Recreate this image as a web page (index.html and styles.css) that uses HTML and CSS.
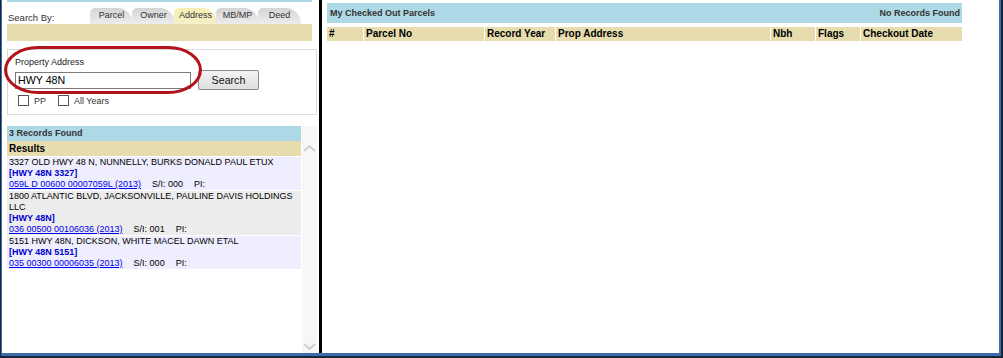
FILE: index.html
```html
<!DOCTYPE html>
<html>
<head>
<meta charset="utf-8">
<link rel="stylesheet" href="styles.css">
</head>
<body>
<div class="frame">
  <div class="frame-inner">
    <div class="left">
      <div class="topline"></div>
      <div class="tabrow">
        <span class="searchby">Search By:</span>
        <div class="tabs">
          <div class="tab">Parcel</div>
          <div class="tab">Owner</div>
          <div class="tab active">Address</div>
          <div class="tab">MB/MP</div>
          <div class="tab">Deed</div>
        </div>
      </div>
      <div class="tabbar"></div>
      <div class="searchbox">
        <div class="label">Property Address</div>
        <div class="inputrow">
          <input class="addr" type="text" value="HWY 48N">
          <button class="btn">Search</button>
        </div>
        <div class="checks">
          <label class="chk"><input type="checkbox" class="cb"> PP</label>
          <label class="chk"><input type="checkbox" class="cb"> All Years</label>
        </div>
        <div class="ring"></div>
      </div>
      <div class="results">
        <div class="reslist">
          <div class="found">3 Records Found</div>
          <div class="reshead">Results</div>
          <div class="row odd">
            <div>3327 OLD HWY 48 N, NUNNELLY, BURKS DONALD PAUL ETUX</div>
            <div class="tag">[HWY 48N 3327]</div>
            <div><a class="plink">059L D 00600 00007059L (2013)</a><span class="meta">S/I: 000</span><span class="meta">PI:</span></div>
          </div>
          <div class="row even">
            <div>1800 ATLANTIC BLVD, JACKSONVILLE, PAULINE DAVIS HOLDINGS<br>LLC</div>
            <div class="tag">[HWY 48N]</div>
            <div><a class="plink">036 00500 00106036 (2013)</a><span class="meta">S/I: 001</span><span class="meta">PI:</span></div>
          </div>
          <div class="row odd">
            <div>5151 HWY 48N, DICKSON, WHITE MACEL DAWN ETAL</div>
            <div class="tag">[HWY 48N 5151]</div>
            <div><a class="plink">035 00300 00006035 (2013)</a><span class="meta">S/I: 000</span><span class="meta">PI:</span></div>
          </div>
        </div>
        <div class="scrollbar">
          <svg width="15" height="10" viewBox="0 0 15 10"><path d="M2 8 L7.5 3 L13 8" fill="none" stroke="#cfcfcf" stroke-width="2"/></svg>
          <svg width="15" height="10" viewBox="0 0 15 10"><path d="M2 2 L7.5 7 L13 2" fill="none" stroke="#cfcfcf" stroke-width="2"/></svg>
        </div>
      </div>
    </div>
    <div class="divider"></div>
    <div class="right">
      <div class="cobar">
        <span>My Checked Out Parcels</span>
        <span>No Records Found</span>
      </div>
      <div class="cohead">
        <div>#</div>
        <div>Parcel No</div>
        <div>Record Year</div>
        <div>Prop Address</div>
        <div>Nbh</div>
        <div>Flags</div>
        <div>Checkout Date</div>
      </div>
    </div>
  </div>
</div>
</body>
</html>
```
FILE: styles.css
```css
html, body {
  margin: 0;
  padding: 0;
  background: #fff;
}
body {
  width: 1003px;
  height: 358px;
  overflow: hidden;
  font-family: "Liberation Sans", Arial, sans-serif;
  font-size: 9px;
  color: #000;
}
.frame {
  box-sizing: border-box;
  height: 358px;
  display: flex;
  border-left: 1px solid #17263a;
  border-right: 2px solid #17263a;
  border-bottom: 2px solid #17263a;
}
.frame-inner {
  flex: 1;
  display: flex;
  border-left: 1px solid #3d6da8;
  border-right: 2px solid #3d6da8;
  border-bottom: 3px solid #3d6da8;
}
.left {
  width: 317px;
  display: flex;
  flex-direction: column;
}
.divider {
  width: 3px;
  background: #000;
}
.right {
  flex: 1;
  padding: 3px 0 0 5px;
}
.topline {
  margin-left: 5px;
  width: 305px;
  height: 2px;
  background: #add8e6;
}
.tabrow {
  height: 22px;
  display: flex;
  align-items: flex-end;
  margin-left: 6px;
}
.searchby {
  width: 82px;
  color: #333;
  font-size: 9.5px;
  position: relative;
  top: -1px;
}
.tabs {
  display: flex;
  align-items: flex-end;
}
.tab {
  width: 43px;
  height: 16px;
  box-sizing: border-box;
  padding-top: 2px;
  text-align: center;
  color: #333;
  font-size: 9px;
  background: linear-gradient(#d4d4d4, #ededed);
  border-radius: 5px 15px 0 0 / 5px 16px 0 0;
  margin-right: -1px;
}
.tab.active {
  background: linear-gradient(#f6eeb0, #f5f0c8);
}
.tabbar {
  margin-left: 5px;
  width: 305px;
  height: 17px;
  background: #e6dcae;
}
.searchbox {
  position: relative;
  margin: 8px 0 0 5px;
  width: 310px;
  height: 66px;
  box-sizing: border-box;
  border: 1px solid #dcdcdc;
  padding: 7px 0 0 7px;
}
.label {
  color: #222;
  font-size: 9px;
  line-height: 11px;
}
.inputrow {
  display: flex;
  align-items: center;
  margin-top: 2px;
}
.addr {
  width: 176px;
  height: 17px;
  box-sizing: border-box;
  border: 1px solid #7a7a7a;
  padding: 0 2px;
  font-family: "Liberation Sans", Arial, sans-serif;
  font-size: 10.67px;
  color: #000;
  outline: none;
  margin: 0;
}
.btn {
  margin-left: 7px;
  width: 61px;
  height: 20px;
  box-sizing: border-box;
  border: 1px solid #8c8c8c;
  border-radius: 2px;
  background: linear-gradient(#f4f4f4, #dedede);
  font-family: "Liberation Sans", Arial, sans-serif;
  font-size: 10.67px;
  color: #111;
  padding: 0;
}
.checks {
  display: flex;
  margin-top: 5px;
  margin-left: 3px;
}
.chk {
  display: flex;
  align-items: center;
  color: #333;
  font-size: 9px;
  margin-right: 12px;
}
.cb {
  appearance: none;
  -webkit-appearance: none;
  width: 11px;
  height: 11px;
  box-sizing: border-box;
  border: 1px solid #555;
  background: #fff;
  margin: 0 5px 0 0;
}
.ring {
  position: absolute;
  left: -4px;
  top: -4px;
  width: 198px;
  height: 48px;
  box-sizing: border-box;
  border: 3px solid #b3141b;
  border-radius: 34px / 24px;
}
.results {
  margin: 11px 0 0 5px;
  flex: 1;
  display: flex;
  min-height: 0;
}
.reslist {
  width: 294px;
}
.found {
  height: 15px;
  line-height: 15px;
  background: #add8e6;
  color: #333;
  font-weight: bold;
  font-size: 9px;
  padding-left: 2px;
}
.reshead {
  height: 15px;
  line-height: 15px;
  background: #e6dcae;
  font-weight: bold;
  font-size: 10px;
  padding-left: 2px;
  margin-bottom: 1px;
}
.row {
  padding-left: 2px;
  line-height: 11px;
  margin-bottom: 1px;
}
.row.odd {
  background: #eeeefe;
}
.row.even {
  background: #ececec;
}
.tag {
  color: #0000cc;
  font-weight: bold;
}
.plink {
  color: #0000ee;
  text-decoration: underline;
}
.meta {
  margin-left: 11px;
}
.scrollbar {
  width: 15px;
  background: #f7f7f7;
  margin-left: 1px;
  display: flex;
  flex-direction: column;
  justify-content: space-between;
  padding: 17px 0 1px;
}
.cobar {
  width: 635px;
  height: 20px;
  box-sizing: border-box;
  background: #add8e6;
  display: flex;
  justify-content: space-between;
  align-items: center;
  padding: 0 2px 0 3px;
  color: #333;
  font-weight: bold;
  font-size: 9px;
}
.cohead {
  margin-top: 4px;
  width: 635px;
  display: grid;
  grid-template-columns: 36px 120px 70px 214px 44px 44px 1fr;
  column-gap: 1px;
  font-weight: bold;
  font-size: 10px;
}
.cohead div {
  background: #e6dcae;
  height: 14px;
  line-height: 14px;
  padding-left: 2px;
}
```
